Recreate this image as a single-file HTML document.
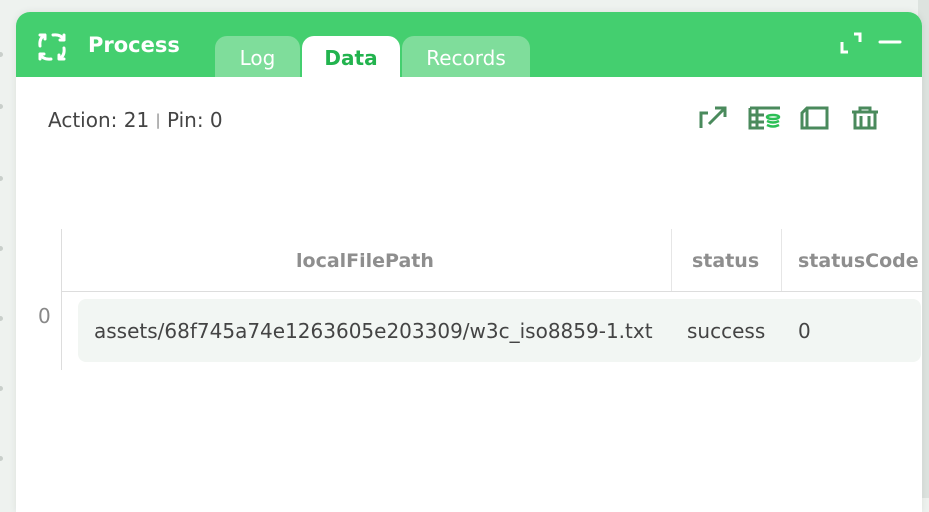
<!DOCTYPE html>
<html><head><style>
html,body{margin:0;padding:0;}
body{width:929px;height:498px;overflow:hidden;background:#eef2ef;font-family:"DejaVu Sans","Liberation Sans",sans-serif;position:relative;}
.dot{position:absolute;width:5px;height:5px;border-radius:50%;background:#c9cfcb;left:-2px;}
.panel{position:absolute;left:16px;top:12px;width:906px;height:500px;background:#fff;border-radius:14px 14px 0 0;overflow:hidden;box-shadow:0 0 8px rgba(0,0,0,0.08);}
.hdr{position:absolute;left:0;top:0;width:100%;height:65px;background:#44cf6f;}
.title{position:absolute;left:72px;top:21px;color:#fff;font-weight:bold;font-size:21px;}
.tab{position:absolute;top:24px;height:41px;background:#7fdd9b;border-radius:12px 12px 0 0;color:#fff;font-size:20px;text-align:center;line-height:44px;}
.tab.act{background:#fff;color:#22b34e;font-weight:bold;}
.info{position:absolute;left:32px;top:96px;font-size:20px;color:#444;height:21px;overflow:hidden;}
.t{position:absolute;font-size:20px;}
.h{color:#8e8e8e;font-weight:bold;font-size:19px;}
</style></head><body>
<div class="dot" style="top:52px"></div><div class="dot" style="top:104px"></div><div class="dot" style="top:176px"></div><div class="dot" style="top:246px"></div><div class="dot" style="top:316px"></div><div class="dot" style="top:386px"></div><div class="dot" style="top:456px"></div>
<div style="position:absolute;left:918px;top:0;width:11px;height:498px;background:#dde3df"></div>
<div class="panel">
<div class="hdr"></div>
<svg style="position:absolute;left:19px;top:18px" width="34" height="34" viewBox="0 0 34 34" fill="none" stroke="#fff" stroke-width="3" stroke-linecap="round">
<path d="M5 16 Q4 8 10 5 M10 5 H5 M10 5 V9"/><path d="M29 18 Q30 26 24 29 M24 29 H29 M24 29 V25"/><path d="M18 5 Q26 4 29 10 M29 10 V5 M29 10 H25"/><path d="M16 29 Q8 30 5 24 M5 24 V29 M5 24 H9"/>
</svg>
<div class="title">Process</div>
<div class="tab" style="left:199px;width:85px">Log</div>
<div class="tab act" style="left:286px;width:98px">Data</div>
<div class="tab" style="left:386px;width:128px">Records</div>
<svg style="position:absolute;left:824px;top:20px" width="64" height="34" viewBox="0 0 64 34" fill="none" stroke="#fff" stroke-width="3">
<path d="M2 10 V20 H8"/><path d="M14 2 H20 V10"/><path d="M40 10 H60" stroke-linecap="round"/>
</svg>
<div class="info">Action: 21 <span style="color:#888;font-size:15px;position:relative;top:-2px">|</span> Pin: 0</div>
<svg style="position:absolute;left:682px;top:92px" width="190" height="26" viewBox="0 0 190 26" fill="none" stroke="#4a8a5c" stroke-width="3">
<path d="M3 24 V9 H10"/><path d="M11 20 L27 4 M17 4 H27 V13"/>
<path d="M52 4 H82 M52 4 V24 H66 M52 11 H66 M52 18 H66 M59 4 V24"/>
<ellipse cx="75" cy="13" rx="6" ry="2" stroke="#2bbf55" stroke-width="2.5"/><path d="M69 17 Q75 20 81 17 M69 21 Q75 24 81 21" stroke="#2bbf55" stroke-width="2.5"/>
<path d="M104 24 V9 L109 4 H129 V24 Z M109 4 V24"/>
<path d="M154 8 H180 M162 8 V4 H172 V8 M157 8 V24 H177 V8 M163 12 V24 M171 12 V24"/>
</svg>
<div style="position:absolute;left:45px;top:217px;width:1px;height:141px;background:#ddd"></div>
<div style="position:absolute;left:46px;top:279px;width:860px;height:1px;background:#ddd"></div>
<div style="position:absolute;left:655px;top:217px;width:1px;height:62px;background:#e6e6e6"></div>
<div style="position:absolute;left:765px;top:217px;width:1px;height:62px;background:#e6e6e6"></div>
<div class="t h" style="left:280px;top:238px">localFilePath</div>
<div class="t h" style="left:676px;top:238px">status</div>
<div class="t h" style="left:782px;top:238px;white-space:nowrap">statusCode</div>
<div class="t" style="left:22px;top:292px;color:#888">0</div>
<div style="position:absolute;left:62px;top:287px;width:843px;height:63px;background:#f2f6f3;border-radius:8px"></div>
<div class="t" style="left:78px;top:307px;color:#444;white-space:nowrap">assets/68f745a74e1263605e203309/w3c_iso8859-1.txt</div>
<div class="t" style="left:671px;top:307px;color:#444">success</div>
<div class="t" style="left:782px;top:307px;color:#444">0</div>
</div>
</body></html>
